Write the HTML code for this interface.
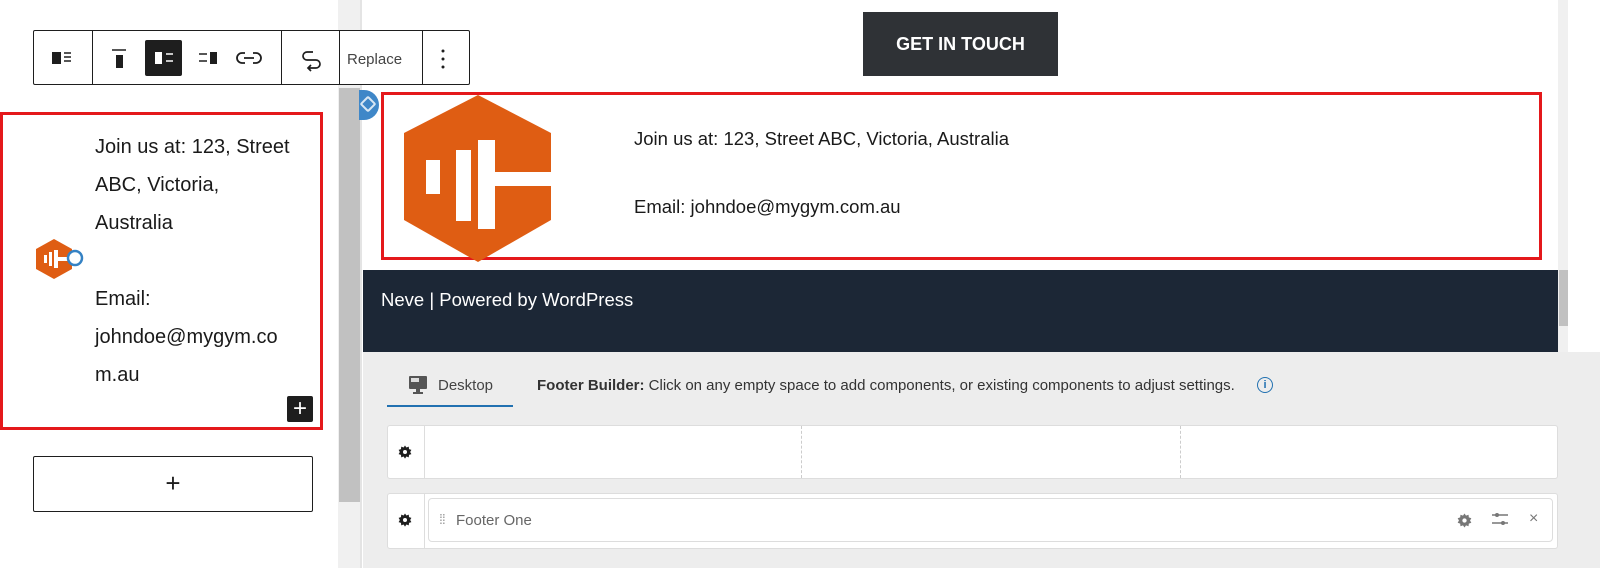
<!DOCTYPE html>
<html><head><style>
body{margin:0;width:1600px;height:568px;position:relative;overflow:hidden;background:#fff;font-family:"Liberation Sans",sans-serif}
.a{position:absolute}
</style></head><body>
<svg width="0" height="0" style="position:absolute"><defs>
<symbol id="g" viewBox="0 0 16 16"><path d="M8 0.5l1.6 2.3 2.7-.9.3 2.8 2.7.9-1.4 2.4 1.4 2.4-2.7.9-.3 2.8-2.7-.9L8 15.5l-1.6-2.3-2.7.9-.3-2.8-2.7-.9L2.1 8 .7 5.6l2.7-.9.3-2.8 2.7.9z"/><circle cx="8" cy="8" r="2.3" fill="#fff"/></symbol>
</defs></svg>
<!-- left panel -->
<div class="a" style="left:338px;top:0;width:24px;height:568px;background:#f0f0f0"></div>
<div class="a" style="left:339px;top:88px;width:21px;height:414px;background:#c1c1c1"></div>
<div class="a" style="left:360px;top:0;width:2px;height:568px;background:#e4e4e4"></div>
<!-- toolbar -->
<div class="a" style="left:33px;top:30px;width:437px;height:55px;border:1px solid #1e1e1e;border-radius:2px;background:#fff;box-sizing:border-box"></div>
<div class="a" style="left:92px;top:30px;width:1px;height:55px;background:#1e1e1e"></div>
<div class="a" style="left:281px;top:30px;width:1px;height:55px;background:#1e1e1e"></div>
<div class="a" style="left:339px;top:30px;width:1px;height:55px;background:#1e1e1e"></div>
<div class="a" style="left:422px;top:30px;width:1px;height:55px;background:#1e1e1e"></div>
<svg class="a" style="left:33px;top:30px" width="437" height="55">
<rect x="19" y="22" width="9" height="12" fill="#1e1e1e"/><path d="M31 23h7M31 27h7M31 31h7" stroke="#1e1e1e" stroke-width="1.5"/>
<path d="M79 20h14" stroke="#1e1e1e" stroke-width="1.5"/><rect x="83" y="25" width="7" height="13" fill="#1e1e1e"/>
<rect x="112" y="10" width="37" height="36" rx="2" fill="#1e1e1e"/><rect x="122" y="22" width="7" height="12" fill="#fff"/><path d="M133 24h7M133 31h7" stroke="#fff" stroke-width="1.5"/>
<path d="M166 24h8M166 31h8" stroke="#1e1e1e" stroke-width="1.5"/><rect x="177" y="22" width="7" height="12" fill="#1e1e1e"/>
<path d="M212 23h-3a5 5 0 0 0 0 10h3M220 23h3a5 5 0 0 1 0 10h-3M211 28h10" stroke="#1e1e1e" stroke-width="1.8" fill="none"/>
<path d="M280 22h-6a4 4 0 0 0 0 8h9a4 4 0 0 1 0 8h-8M278 35l-3 3 3 3" stroke="#1e1e1e" stroke-width="1.7" fill="none"/>
<text x="314" y="34" font-size="15" fill="#444">Replace</text>
<circle cx="410" cy="21" r="1.5" fill="#1e1e1e"/><circle cx="410" cy="29" r="1.5" fill="#1e1e1e"/><circle cx="410" cy="37" r="1.5" fill="#1e1e1e"/>
</svg>
<!-- left card -->
<div class="a" style="left:0;top:112px;width:323px;height:318px;border:3px solid #e4181b;box-sizing:border-box"></div>
<div class="a" style="left:95px;top:128px;font-size:20px;line-height:38px;color:#1a1a1a;width:220px">Join us at: 123, Street<br>ABC, Victoria,<br>Australia<br><br>Email:<br>johndoe@mygym.co<br>m.au</div>
<svg class="a" style="left:35px;top:238px" width="52" height="42">
<polygon points="19,1 37,11 37,31 19,41 1,31 1,11" fill="#df5d13"/>
<rect x="9" y="17" width="3" height="8" fill="#fff"/><rect x="14" y="14" width="3" height="14" fill="#fff"/><rect x="19" y="12" width="4" height="18" fill="#fff"/><rect x="23" y="19" width="14" height="4" fill="#fff"/>
<circle cx="40" cy="20" r="7" fill="#fff" stroke="#3582c4" stroke-width="2.5"/>
</svg>
<div class="a" style="left:287px;top:396px;width:26px;height:26px;background:#1e1e1e;border-radius:2px;color:#fff;font-size:24px;line-height:25px;text-align:center">+</div>
<div class="a" style="left:33px;top:456px;width:280px;height:56px;border:1px solid #1e1e1e;box-sizing:border-box;border-radius:2px;font-size:26px;text-align:center;line-height:52px;color:#1e1e1e">+</div>
<!-- preview -->
<div class="a" style="left:863px;top:12px;width:195px;height:64px;background:#2f3236;color:#fff;font-weight:bold;font-size:18px;text-align:center;line-height:64px">GET IN TOUCH</div>
<div class="a" style="left:381px;top:92px;width:1161px;height:168px;border:3px solid #e4181b;box-sizing:border-box"></div>
<svg class="a" style="left:396px;top:95px" width="156" height="168">
<polygon points="82,0 155,38 155,125 82,167 8,125 8,38" fill="#df5d13"/>
<rect x="30" y="65" width="14" height="34" fill="#fff"/><rect x="60" y="55" width="15" height="71" fill="#fff"/><rect x="82" y="45" width="17" height="89" fill="#fff"/><rect x="99" y="77" width="57" height="14" fill="#fff"/>
</svg>
<div class="a" style="left:359px;top:90px;width:20px;height:30px;border-radius:0 15px 15px 0;background:#3f87c8"></div>
<div class="a" style="left:362px;top:98px;width:8px;height:8px;border:2px solid #fff;border-radius:2px;transform:rotate(45deg);opacity:.8"></div>
<div class="a" style="left:634px;top:128px;font-size:18.5px;color:#1a1a1a">Join us at: 123, Street ABC, Victoria, Australia</div>
<div class="a" style="left:634px;top:196px;font-size:18.5px;color:#1a1a1a">Email: johndoe@mygym.com.au</div>
<div class="a" style="left:363px;top:270px;width:1195px;height:82px;background:#1c2736"></div>
<div class="a" style="left:381px;top:289px;font-size:18.5px;color:#fff">Neve | Powered by WordPress</div>
<div class="a" style="left:1558px;top:0;width:10px;height:352px;background:#f0f0f0"></div>
<div class="a" style="left:1559px;top:270px;width:9px;height:56px;background:#c1c1c1"></div>
<!-- builder -->
<div class="a" style="left:363px;top:352px;width:1237px;height:216px;background:#ededed"></div>
<svg class="a" style="left:408px;top:374px" width="22" height="22"><rect x="1" y="2" width="18" height="13" fill="#555" rx="1"/><rect x="3" y="4" width="8" height="4" fill="#ddd"/><rect x="8" y="15" width="4" height="3" fill="#555"/><rect x="5" y="18" width="10" height="2" fill="#555"/></svg>
<div class="a" style="left:438px;top:377px;font-size:15px;color:#444">Desktop</div>
<div class="a" style="left:387px;top:405px;width:126px;height:2px;background:#2271b1"></div>
<div class="a" style="left:537px;top:377px;font-size:15px;color:#333"><b>Footer Builder:</b> Click on any empty space to add components, or existing components to adjust settings.</div>
<div class="a" style="left:1257px;top:377px;width:14px;height:14px;border:1.5px solid #2271b1;border-radius:50%;color:#2271b1;font-size:11px;text-align:center;line-height:14px;font-weight:bold">i</div>
<div class="a" style="left:387px;top:425px;width:1171px;height:54px;background:#fff;border:1px solid #ddd;border-radius:3px;box-sizing:border-box"></div>
<div class="a" style="left:424px;top:426px;width:1px;height:52px;background:#ddd"></div>
<div class="a" style="left:801px;top:426px;width:0;height:52px;border-left:1px dashed #ccc"></div>
<div class="a" style="left:1180px;top:426px;width:0;height:52px;border-left:1px dashed #ccc"></div>
<div class="a" style="left:387px;top:493px;width:1171px;height:56px;background:#fff;border:1px solid #ddd;border-radius:3px;box-sizing:border-box"></div>
<div class="a" style="left:424px;top:494px;width:1px;height:54px;background:#ddd"></div>
<div class="a" style="left:428px;top:498px;width:1125px;height:44px;border:1px solid #ddd;border-radius:4px;box-sizing:border-box"></div>
<svg class="a" style="left:398px;top:445px" width="14" height="14" fill="#1e1e1e"><use href="#g"/></svg>
<svg class="a" style="left:398px;top:513px" width="14" height="14" fill="#1e1e1e"><use href="#g"/></svg>
<div class="a" style="left:439px;top:511px;font-size:14px;color:#999;letter-spacing:-1px">⁞⁞</div>
<div class="a" style="left:456px;top:512px;font-size:15px;color:#666">Footer One</div>
<svg class="a" style="left:1457px;top:513px" width="15" height="15" fill="#777"><use href="#g"/></svg>
<svg class="a" style="left:1491px;top:511px" width="18" height="16"><path d="M1 4h16M1 12h16" stroke="#777" stroke-width="1.5"/><circle cx="6" cy="4" r="2" fill="#777"/><circle cx="12" cy="12" r="2" fill="#777"/></svg>
<div class="a" style="left:1529px;top:510px;font-size:16px;color:#777">×</div>
</body></html>
